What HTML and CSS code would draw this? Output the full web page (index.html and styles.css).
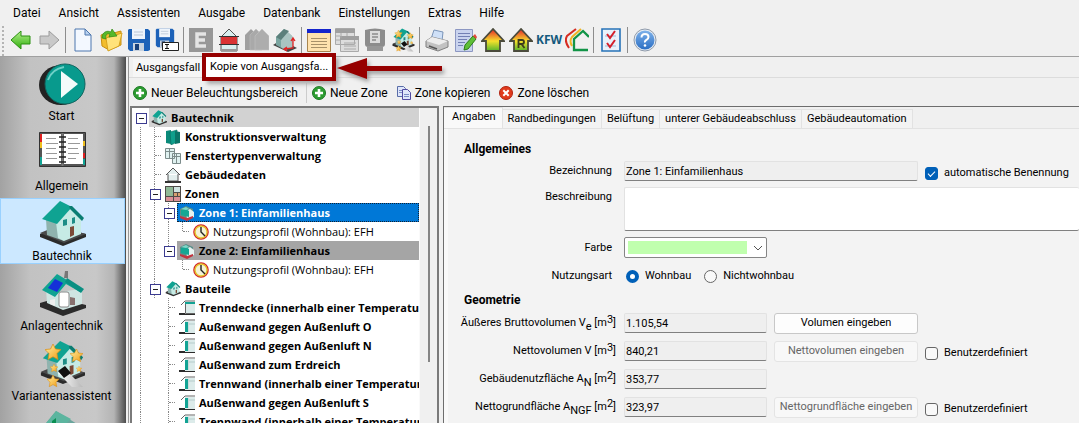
FILE: index.html
```html
<!DOCTYPE html>
<html lang="de">
<head>
<meta charset="utf-8">
<title>Bautechnik</title>
<link rel="stylesheet" href="styles.css">
</head>
<body>
<svg class="defs" aria-hidden="true">
  <defs>
    <linearGradient id="g-green" x1="0" y1="0" x2="0" y2="1"><stop offset="0" stop-color="#b4f08c"/><stop offset="1" stop-color="#2fae0c"/></linearGradient>
    <linearGradient id="g-heat" x1="0" y1="0" x2="0" y2="1"><stop offset="0.1" stop-color="#e8432a"/><stop offset="0.55" stop-color="#f5e02c"/><stop offset="1" stop-color="#55b52c"/></linearGradient>
    <linearGradient id="g-blue" x1="0" y1="0" x2="0" y2="1"><stop offset="0" stop-color="#7fb2ea"/><stop offset="1" stop-color="#2b6fc4"/></linearGradient>
    <linearGradient id="g-star" x1="0" y1="0" x2="1" y2="1"><stop offset="0" stop-color="#fff3a8"/><stop offset="1" stop-color="#f29a10"/></linearGradient>
    <linearGradient id="g-wand" x1="0" y1="0" x2="1" y2="0"><stop offset="0" stop-color="#fff"/><stop offset="1" stop-color="#b8b8b8"/></linearGradient>
  </defs>
  <symbol id="house" viewBox="0 0 48 48">
    <path d="M2 34l17-7 29 7v3L25 46 2 37z" fill="#2b2b2b"/>
    <path d="M2 33l17-7 29 8-22 9z" fill="#4a4a4a"/>
    <path d="M8 19l12 3 6 19-17-6z" fill="#8fb3ae"/>
    <path d="M18 22L31 6l12 12v16L26 41l-6-3z" fill="#c6ebe5"/>
    <path d="M4 19L22 1l12 6-15 17z" fill="#0fa392"/>
    <path d="M31 6l3 0 12 12-2 3L32 9z" fill="#0a7d72"/>
    <path d="M25 20l4-1v6l-4 1zM34 18l3-1v6l-3 1z" fill="#1d8d86"/>
    <path d="M32 27l4-1v9l-4 2z" fill="#7c4a36"/>
  </symbol>
  <symbol id="solar" viewBox="0 0 48 48">
    <path d="M2 33l17-5 29 7v3L25 46 2 37z" fill="#2b2b2b"/>
    <path d="M8 19l12 3 24-3v15l-19 6-16-7z" fill="#cfe5e2"/>
    <path d="M26 8h4v-7h-3z" fill="#777"/>
    <path d="M4 20L19 4l25 15-2 3-14-8-11 13z" fill="#0fa392"/>
    <path d="M29 8L46 19l-3 4L27 12z" fill="#0a8f82"/>
    <path d="M10 18l7-9 8 4-6 9z" fill="#1530d8"/>
    <rect x="21" y="22" width="10" height="15" rx="2" fill="#fff" stroke="#888"/>
    <path d="M12 30l5-1v7l-5-2z" fill="#eee"/><path d="M32 27l5 1v7h-5z" fill="#87706e"/>
  </symbol>
  <symbol id="star" viewBox="0 0 16 16"><path d="M8 0l2.500 5 5.500.6-4 4 1 6L8 12.800 3 15.600l1-6-4-4L5.500 5z" fill="url(#g-star)" stroke="#d98c12" stroke-width=".7"/></symbol>
  <symbol id="wizard" viewBox="0 0 48 48">
    <use href="#house" width="48" height="46"/>
    <path d="M26 29l7 6 12 12H34L20 33z" fill="url(#g-wand)"/>
    <path d="M20 31l7-5 6 7-7 5z" fill="#111"/>
    <use href="#star" x="7" y="4" width="16" height="16"/><use href="#star" x="32" y="9" width="13" height="13"/>
    <use href="#star" x="12" y="24" width="8" height="8"/><use href="#star" x="9" y="35" width="12" height="12"/><use href="#star" x="38" y="26" width="6" height="6"/>
  </symbol>
  <symbol id="floppy" viewBox="0 0 24 24">
    <path d="M2 1h19l2 2v19l-2 1H3l-2-2V2z" fill="#1d62b8"/><path d="M5 1h13v10H5z" fill="#eef4fb"/>
    <path d="M7 4h9M7 7h9" stroke="#b9c6d6"/><path d="M6 15h11v8H6z" fill="#c9d3df"/><path d="M8 16h4v6H8z" fill="#173f79"/>
  </symbol>
  <symbol id="page" viewBox="0 0 24 24"><path d="M4 1h10l6 6v16H4z" fill="#f3f8ff" stroke="#4c76ae"/><path d="M14 1v6h6z" fill="#b9d2f0" stroke="#4c76ae"/></symbol>
  <symbol id="plus" viewBox="0 0 14 14"><circle cx="7" cy="7" r="6.500" fill="#2c9c31" stroke="#1b7822"/><path d="M7 3v8M3 7h8" stroke="#fff" stroke-width="2.600"/></symbol>
  <symbol id="part" viewBox="0 0 16 16"><path d="M6 2h10v12H6z" fill="#dcebea"/><path d="M2 5L6 1h10" fill="none" stroke="#666"/><path d="M9 3v10M10 5h6" stroke="#b5cccb"/><path d="M6 3h3v10H6z" fill="#12a394"/><path d="M0 13h6v2H0zM5 14h11v1H5z" fill="#2b2b2b"/></symbol>
  <symbol id="slab" viewBox="0 0 16 16"><path d="M7 4h9v9H7z" fill="#dcebea"/><path d="M2 5L6 1h10M6.500 4v9.500H16" fill="none" stroke="#666"/><path d="M6 3h10" stroke="#12a394" stroke-width="2"/><path d="M0 13h6v2H0zM5 14h11v1H5z" fill="#2b2b2b"/></symbol>
  <symbol id="zone" viewBox="0 0 16 16"><path d="M1 4l6-3 7 3v7l-6 4-7-4z" fill="#5a8f89"/><path d="M7 6l4-2 4 3v5l-7 2z" fill="#e6f2f0"/><path d="M2 5l5-1 3 2v6l-8-2z" fill="#14a794"/><path d="M2 4l5-2 3 2-3 1z" fill="#7fd8c9"/><path d="M1 11l7 2 6-2v2l-6 3-7-3z" fill="#c4333f"/></symbol>
  <symbol id="clock" viewBox="0 0 16 16"><circle cx="8" cy="8" r="7" fill="#f5f3d7" stroke="#d3222a" stroke-width="1.600"/><circle cx="8" cy="8" r="6" fill="none" stroke="#e4c62c" stroke-width="1.400"/><path d="M8 3v5l4 4" fill="none" stroke="#222" stroke-width="1.400"/></symbol>
</svg>

<nav class="menu" aria-label="Menü">
  <button>Datei</button><button>Ansicht</button><button>Assistenten</button><button>Ausgabe</button><button>Datenbank</button><button>Einstellungen</button><button>Extras</button><button>Hilfe</button>
</nav>

<div class="toolbar" role="toolbar">
  <button aria-label="Zurück"><svg viewBox="0 0 24 24"><path d="M2 12L12 3v5h9v8h-9v5z" fill="url(#g-green)" stroke="#2a9010"/></svg></button>
  <button aria-label="Vor"><svg viewBox="0 0 24 24"><path d="M22 12L12 3v5H3v8h9v5z" fill="#c9c9c9" stroke="#9c9c9c"/></svg></button>
  <i></i>
  <button aria-label="Neu"><svg viewBox="0 0 24 24"><use href="#page"/></svg></button>
  <button aria-label="Öffnen"><svg viewBox="0 0 24 24"><path d="M2 7l7-3 2 2 11-3v14l-12 5-7-4z" fill="#f2bd2e" stroke="#c78f12"/><path d="M7 10l16-5-3 13-11 5z" fill="#ffe27a" stroke="#d7a21e"/><path d="M3 10C3 4 8 2 12 4l1-3 5 7-8 1 1-3C8 5 6 7 7 11z" fill="#55b82b" stroke="#2f8a12" stroke-width=".7"/></svg></button>
  <button aria-label="Speichern"><svg viewBox="0 0 24 24"><use href="#floppy"/></svg></button>
  <button aria-label="Speichern unter"><svg viewBox="0 0 24 24"><use href="#floppy" width="20" height="20"/><path d="M7.500 14.500h16v8h-16z" fill="#fff" stroke="#222"/><path d="M10 16.500h4M10 20.500h4M12 16v5" stroke="#111"/></svg></button>
  <i></i>
  <button aria-label="Energieausweis"><svg viewBox="0 0 24 24"><path d="M0 0h24v24H0z" fill="#979797"/><path d="M17 6H8v12h9M8 12h8" fill="none" stroke="#e4e4e4" stroke-width="3.500"/></svg></button>
  <button aria-label="Schnitt"><svg viewBox="0 0 24 24"><path d="M4 9l8-8 8 8v14H4z" fill="#d9efef" stroke="#555"/><path d="M4 9h16v7H4z" fill="#d93434"/><path d="M2 8.500h20M2 16.500h20" stroke="#333"/><path d="M4 22h16" stroke="#999" stroke-width="2"/></svg></button>
  <button aria-label="Gebäude"><svg viewBox="0 0 24 24"><path d="M0 7l6-6 6 6v15H0z" fill="#a0a0a0"/><path d="M5 7l6-6 6 6v15H5z" fill="#a9a9a9" stroke="#bdbdbd" stroke-width=".6"/><path d="M10 8l7-7 7 7v14H10z" fill="#adadad" stroke="#c2c2c2" stroke-width=".6"/></svg></button>
  <button aria-label="Ausrichtung"><svg viewBox="0 0 24 24"><path d="M0 17l8-5 16 8-9 4z" fill="#444"/><path d="M3 9l8-8 8 7v11l-7 3-9-5z" fill="#7aa5a0"/><path d="M8 12l6-9 6 6v10l-8 3-4-3z" fill="#a9c4c1"/><path d="M3 9l8-8 5 2-8 9z" fill="#5b7f7b"/><path d="M20 11v9l-8 1M18 13l2-3 2 3M14 19l-3 2 3 2" fill="none" stroke="#e02424" stroke-width="1.300"/></svg></button>
  <i></i>
  <button aria-label="Tabelle"><svg viewBox="0 0 24 24"><path d="M.5 1.500h23v22H.5z" fill="#ffe2ae" stroke="#a88650"/><path d="M0 1h24v4H0z" fill="#1424cc"/><path d="M4 10.500h16M4 13.500h16M4 16.500h16M4 19.500h16" stroke="#a89068"/></svg></button>
  <button aria-label="Listen"><svg viewBox="0 0 24 24"><path d="M.5.500h19v16H.5zM5.500 9.500h18v14h-18z" fill="#ddd" stroke="#aaa"/><path d="M0 1h20v4H0zM5 8h19v4H5z" fill="#9f9f9f"/><path d="M6 5v5M12 5v3M0 8h5M0 12h5M9 15h12M9 18h12M9 21h12" stroke="#aaa"/></svg></button>
  <button aria-label="Bericht"><svg viewBox="0 0 24 24"><path d="M2 2q10-3 20 0v14q0 3-3 3H5q-3 0-3-3z" fill="#8c8c8c"/><path d="M7 3h10v12H7z" fill="#dcdcdc"/><path d="M9 6h6M9 9h6M9 12h4" stroke="#8c8c8c" stroke-width="1.500"/><path d="M4 18h16v5H4z" fill="#979797"/></svg></button>
  <button aria-label="Assistent"><svg viewBox="0 0 48 48"><use href="#wizard"/></svg></button>
  <i></i>
  <button aria-label="Drucken"><svg viewBox="0 0 24 24"><path d="M6 11L9 2l9 2-1 9z" fill="#cfe0f7" stroke="#7a94b8"/><path d="M1 13l6-4 16 4v6l-10 4-12-4z" fill="#c2c2c2" stroke="#808080"/><path d="M1 13l6-4 16 4-9 4z" fill="#ededed"/><path d="M4 18l8 3" stroke="#555" stroke-width="1.500"/></svg></button>
  <button aria-label="Bearbeiten"><svg viewBox="0 0 24 24"><path d="M2.500 1.500h17v22h-17z" fill="#c9d3ee" stroke="#8c97c2"/><path d="M5 5.500h12M5 8.500h12M5 11.500h9M5 14.500h7M5 17.500h5" stroke="#7380b4"/><path d="M11 22l1-5L20 8l3 3-8 10z" fill="#5fbf38" stroke="#2c7d15"/><path d="M20 8l2-2 2 3-1 2z" fill="#e24a3c"/></svg></button>
  <button aria-label="Wärme"><svg viewBox="0 0 24 24"><path d="M12 1L1 13h4v10h14V13h4z" fill="url(#g-heat)" stroke="#4b4b3c" stroke-width="1.800"/></svg></button>
  <button aria-label="Referenz"><svg viewBox="0 0 24 24"><path d="M12 1L1 13h4v10h14V13h4z" fill="url(#g-heat)" stroke="#4b4b3c" stroke-width="1.800"/><path d="M9.500 20v-8H13q2 0 2 2t-2 2H9.500m3 0l3 4" fill="none" stroke="#3b3b1c" stroke-width="1.800"/></svg></button>
  <button class="kfw">KFW</button>
  <button aria-label="Sanierung"><svg viewBox="0 0 24 24"><path d="M4 20Q-1 13 2 8L11 1" fill="none" stroke="#d62c22" stroke-width="2"/><path d="M7 18Q4 13 7 9L16 1" fill="none" stroke="#f0b324" stroke-width="2"/><path d="M24 9l-6-6-9 8v11h14" fill="none" stroke="#129447" stroke-width="2.300"/></svg></button>
  <i></i>
  <button aria-label="Prüfliste"><svg viewBox="0 0 24 24"><path d="M3 1h18v22H3z" fill="#e9f2fb" stroke="#2773b8" stroke-width="1.600"/><path d="M6 8h11M6 18h11" stroke="#9dbbd6"/><path d="M8 6l3 4 5-7M8 15l3 4 5-7" fill="none" stroke="#d3202c" stroke-width="2"/></svg></button>
  <i></i>
  <button aria-label="Hilfe"><svg viewBox="0 0 24 24"><circle cx="12" cy="12" r="11" fill="#e8edf3" stroke="#8f9bab"/><circle cx="12" cy="12" r="9.500" fill="url(#g-blue)"/><path d="M8.500 9.500q0-3.500 3.500-3.500t3.500 3q0 1.800-2 2.900T12 14.500" fill="none" stroke="#fff" stroke-width="2"/><circle cx="12" cy="17.500" r="1.300" fill="#fff"/></svg></button>
</div>

<div class="app">
  <nav class="side" aria-label="Bereiche">
    <a href="#start"><svg viewBox="0 0 48 48"><ellipse cx="23" cy="25" rx="22" ry="20" fill="#222"/><ellipse cx="27" cy="24" rx="20" ry="20" fill="#089a8d" stroke="#10655f"/><path d="M10 20Q14 9 26 7" fill="none" stroke="#6fd0c7" stroke-width="2"/><path d="M23 11v27l17-14z" fill="#f4fbfa"/></svg>Start</a>
    <a href="#allgemein"><svg viewBox="0 0 48 48"><path d="M1.500 2.500h46v34h-46z" fill="#555" stroke="#333"/><path d="M4 4h19v30H4zM26 4h19v30H26z" fill="#fff"/><path d="M2 4h2v8H2zM45 23h2v5h-2z" fill="#e02020"/><path d="M2 12h2v6H2zM45 11h2v5h-2z" fill="#f0c020"/><path d="M2 27h2v8H2zM45 29h2v6h-2z" fill="#12a394"/><path d="M8 8.500h10M8 13.500h12M8 18.500h10M8 23.500h11M8 28.500h11M30 8.500h10M30 13.500h12M30 18.500h10M30 23.500h11M30 28.500h8" stroke="#999"/><path d="M24.500 3v33" stroke="#777" stroke-width="2"/><path d="M21 7h7M21 12h7M21 17h7M21 22h7M21 27h7M21 32h7" stroke="#222" stroke-width="1.500"/></svg>Allgemein</a>
    <a href="#bautechnik" class="on"><svg><use href="#house"/></svg>Bautechnik</a>
    <a href="#anlagentechnik"><svg><use href="#solar"/></svg>Anlagentechnik</a>
    <a href="#varianten"><svg><use href="#wizard"/></svg>Variantenassistent</a>
    <a href="#weiter" aria-label="Weiterer Bereich"><svg viewBox="0 0 48 48"><path d="M4 18L18 1l26 16v19H6z" fill="#6aa59c"/><path d="M4 18L18 1l15 8-15 14z" fill="#5cb59f"/><path d="M14 11l4-3v8l-4 2z" fill="#0a8f52"/></svg></a>
  </nav>

  <main class="main">
    <div class="cases" role="tablist">
      <button role="tab">Ausgangsfall</button>
      <div class="current"><button role="tab" aria-selected="true">Kopie von Ausgangsfa...</button>
        <svg class="arrow" viewBox="0 0 110 36"><path d="M2 17L32 7v8h75v5H32v8z" fill="#960000"/></svg>
      </div>
    </div>
    <div class="actions" role="toolbar">
      <button><svg><use href="#plus"/></svg>Neuer Beleuchtungsbereich</button>
      <i></i>
      <button><svg><use href="#plus"/></svg>Neue Zone</button>
      <button><svg viewBox="0 0 14 14"><path d="M.5.500h6l2 2v8h-8z" fill="#dfe6fa" stroke="#596da8"/><path d="M5.500 3.500h5l3 3v7h-8z" fill="#dfe6fa" stroke="#5149a0"/><path d="M7 8.500h5M7 10.500h5M2 4.500h3M2 6.500h3" stroke="#7b8cc4"/></svg>Zone kopieren</button>
      <button><svg viewBox="0 0 14 14"><circle cx="7" cy="7" r="6.500" fill="#e03a1c" stroke="#b02310"/><path d="M4.300 4.300l5.400 5.400M9.700 4.300L4.300 9.700" stroke="#fff" stroke-width="2"/></svg>Zone löschen</button>
    </div>

    <div class="split">
      <section class="treebox">
        <ul class="tree">
          <li class="grey"><b class="box end"></b><span><svg><use href="#house"/></svg>Bautechnik</span></li>
          <li><b></b><b class="tee"></b><span><svg viewBox="0 0 16 16"><path d="M1 2l5-1v14l-5-1z" fill="#0b8a7a"/><path d="M5 3l7-2v12l-6 3z" fill="#0f9f8c" stroke="#07695d" stroke-width=".6"/><path d="M10 2l5 1v11l-5 1z" fill="#0a7568"/></svg>Konstruktionsverwaltung</span></li>
          <li><b></b><b class="tee"></b><span><svg viewBox="0 0 16 16"><path d="M.5.500h9v10h-9zM7.500 5.500h8v10h-8z" fill="#dff1f0" stroke="#7c8c8b"/><path d="M4.500 0v10M0 3.500h10M11.500 5v11M7 8.500h9" stroke="#7c8c8b"/></svg>Fenstertypenverwaltung</span></li>
          <li><b></b><b class="tee"></b><span><svg viewBox="0 0 16 16"><path d="M1 8l7-7 7 7M3 7v7h10V7" fill="#e3efee" stroke="#555"/><path d="M0 14h16v2H0z" fill="#333"/></svg>Gebäudedaten</span></li>
          <li><b></b><b class="box"></b><span><svg viewBox="0 0 16 16"><path d="M0 0h16v16H0z" fill="#4e4b48"/><path d="M1 1h7v9H1z" fill="#8fb896"/><path d="M9 1h6v5H9z" fill="#cfe3e0"/><path d="M9 7h3v3H9zM13 7h2v3h-2z" fill="#d8a070"/><path d="M1 11h7v4H1zM9 11h6v4H9z" fill="#d98f96"/></svg>Zonen</span></li>
          <li class="picked"><b></b><b></b><b class="box"></b><span><svg><use href="#zone"/></svg>Zone 1: Einfamilienhaus</span></li>
          <li class="sub"><b></b><b></b><b></b><b class="tee last"></b><span><svg><use href="#clock"/></svg>Nutzungsprofil (Wohnbau): EFH</span></li>
          <li class="dark"><b></b><b></b><b class="box last"></b><span><svg><use href="#zone"/></svg>Zone 2: Einfamilienhaus</span></li>
          <li class="sub"><b></b><b></b><b class="none"></b><b class="tee last"></b><span><svg><use href="#clock"/></svg>Nutzungsprofil (Wohnbau): EFH</span></li>
          <li><b></b><b class="box"></b><span><svg><use href="#house"/></svg>Bauteile</span></li>
          <li><b></b><b class="none"></b><b class="tee"></b><span><svg><use href="#slab"/></svg>Trenndecke (innerhalb einer Temperaturzone)</span></li>
          <li><b></b><b class="none"></b><b class="tee"></b><span><svg><use href="#part"/></svg>Außenwand gegen Außenluft O</span></li>
          <li><b></b><b class="none"></b><b class="tee"></b><span><svg><use href="#part"/></svg>Außenwand gegen Außenluft N</span></li>
          <li><b></b><b class="none"></b><b class="tee"></b><span><svg><use href="#part"/></svg>Außenwand zum Erdreich</span></li>
          <li><b></b><b class="none"></b><b class="tee"></b><span><svg><use href="#part"/></svg>Trennwand (innerhalb einer Temperaturzone)</span></li>
          <li><b></b><b class="none"></b><b class="tee"></b><span><svg><use href="#part"/></svg>Außenwand gegen Außenluft S</span></li>
          <li><b></b><b class="none"></b><b class="tee"></b><span><svg><use href="#part"/></svg>Trennwand (innerhalb einer Temperaturzone)</span></li>
        </ul>
        <div class="scroll"><div class="thumb"></div></div>
      </section>

      <section class="detail">
        <div class="tabs" role="tablist">
          <button role="tab" aria-selected="true">Angaben</button><button role="tab">Randbedingungen</button><button role="tab">Belüftung</button><button role="tab">unterer Gebäudeabschluss</button><button role="tab">Gebäudeautomation</button>
        </div>
        <form class="form">
          <h2>Allgemeines</h2>
          <div class="row"><label for="name">Bezeichnung</label><input id="name" class="text long" readonly value="Zone 1: Einfamilienhaus"><label class="check low"><input type="checkbox" checked>automatische Benennung</label></div>
          <div class="row top"><label for="desc">Beschreibung</label><textarea id="desc"></textarea></div>
          <div class="row"><label for="color">Farbe</label><div class="combo"><select id="color" aria-label="Farbe"><option></option></select><svg viewBox="0 0 10 6"><path d="M1 1l4 4 4-4" fill="none" stroke="#555"/></svg></div></div>
          <div class="row radios"><span class="label">Nutzungsart</span><label class="check"><input type="radio" name="use" checked>Wohnbau</label><label class="check"><input type="radio" name="use">Nichtwohnbau</label></div>
          <h2>Geometrie</h2>
          <div class="geo">
            <div class="row"><label for="ve">Äußeres Bruttovolumen V<sub>e</sub> [m<sup>3</sup>]</label><input id="ve" class="text" readonly value="1.105,54"><button type="button">Volumen eingeben</button></div>
            <div class="row"><label for="v">Nettovolumen V [m<sup>3</sup>]</label><input id="v" class="text" readonly value="840,21"><button type="button" disabled>Nettovolumen eingeben</button><label class="check low"><input type="checkbox">Benutzerdefiniert</label></div>
            <div class="row"><label for="an">Gebäudenutzfläche A<sub>N</sub> [m<sup>2</sup>]</label><input id="an" class="text" readonly value="353,77"></div>
            <div class="row"><label for="ngf">Nettogrundfläche A<sub>NGF</sub> [m<sup>2</sup>]</label><input id="ngf" class="text" readonly value="323,97"><button type="button" disabled>Nettogrundfläche eingeben</button><label class="check low"><input type="checkbox">Benutzerdefiniert</label></div>
          </div>
        </form>
      </section>
    </div>
  </main>
</div>
</body>
</html>
```
FILE: styles.css
```css
* { box-sizing: border-box; }
body {
  margin: 0; height: 100vh; overflow: hidden;
  display: flex; flex-direction: column;
  background: #f0f0f0; color: #000;
  font: 12px/16px Roboto, "Open Sans", sans-serif;
}
button { font: inherit; color: inherit; border: 0; background: none; padding: 0; margin: 0; white-space: nowrap; }
.defs { position: absolute; width: 0; height: 0; }

.menu { display: flex; gap: 18px; padding: 5px 13px 3px; flex: none; }

.toolbar {
  display: flex; align-items: center; height: 32px; padding-left: 7px; flex: none;
  background: linear-gradient(#b4b4b4 2px, transparent 2px) 2px 2px / 2px 4px repeat-y;
}
.toolbar button { width: 28px; height: 28px; display: grid; place-items: center; }
.toolbar svg { width: 24px; height: 24px; }
.toolbar i { width: 1px; height: 26px; margin: 0 3px 0 2px; background: #8d8d8d; }
.toolbar .kfw { font: bold 12px/24px "Open Sans", sans-serif; color: #155a7d; }

.app { flex: 1; min-height: 0; display: flex; border-top: 1px solid #a0a0a0; }
.side {
  width: 128px; flex: none; overflow: hidden;
  display: flex; flex-direction: column; gap: 4px; padding: 1px 3px 0 0;
  background: linear-gradient(90deg, #a2a2a2, #c2c2c2 30px, #c8c8c8 96px, #b4b4b4 114px, #4c4c4c 126px, #f0f0f0 126px);
}
.side a { flex: none; height: 66px; padding: 2px 2px 0 0; display: flex; flex-direction: column; align-items: center; color: #000; text-decoration: none; }
.side svg { width: 48px; height: 48px; flex: none; }
.side .on { background: #cce8ff; border: 1px solid #99d1ff; padding: 1px 1px 0 0; }

.main { flex: 1; min-width: 0; display: flex; flex-direction: column; border-left: 1px solid #999; }
.cases { display: flex; align-items: flex-end; height: 21px; padding-left: 4px; border-bottom: 1px solid #dcdcdc; font-size: 11px; flex: none; }
.cases > button { height: 18px; padding: 0 6px 0 3px; background: #f6f6f6; }
.current { position: relative; }
.current button { display: block; height: 20px; width: 126px; background: #fff; outline: 4px solid #960000; box-shadow: 4px 4px 4px 3px #aaa; }
.arrow { position: absolute; left: 129px; top: -6px; width: 110px; height: 36px; filter: drop-shadow(2px 3px 2px #999); }
.actions { display: flex; align-items: center; gap: 9px; height: 28px; padding: 2px 0 0 4px; flex: none; }
.actions button { display: flex; align-items: center; gap: 4px; }
.actions svg { width: 14px; height: 14px; }
.actions i { width: 1px; height: 20px; background: #ccc; margin: 0 -4px 0 -1px; }

.split { flex: 1; min-height: 0; display: flex; gap: 4px; padding-left: 1px; }
.treebox { width: 309px; flex: none; display: flex; background: #fff; border: 2px solid #7a7a7a; border-bottom: 0; overflow: hidden; }
.tree { list-style: none; margin: 0; padding: 0 0 0 1px; flex: 1; min-width: 0; font: bold 11px/18px "Open Sans", sans-serif; }
.tree li { display: flex; height: 19px; overflow: hidden; white-space: nowrap; }
.tree b { width: 14px; height: 19px; flex: none; position: relative; background: repeating-linear-gradient(#888 0 1px, transparent 1px 2px) 7px 0 / 1px 19px no-repeat; }
.tree .none, .tree .end { background: none; }
.tree .last { background-size: 1px 10px; }
.tree .tee::after { content: ""; position: absolute; left: 8px; top: 9px; width: 6px; border-top: 1px dotted #888; }
.tree .box::before { content: ""; position: absolute; left: 3px; top: 5px; width: 9px; height: 9px; border: 1px solid #3b3b90; background: linear-gradient(#222, #222) center / 5px 1px no-repeat #fff; }
.tree span { flex: 1; margin: 0 0 0 2px; padding-left: 2px; display: flex; gap: 4px; align-items: center; }
.tree svg { width: 16px; height: 16px; flex: none; }
.grey span { background: #d2d2d2; }
.dark span { background: #a5a5a5; }
.picked span { background: #0078d7; color: #fff; outline: 1px dotted #123; outline-offset: -1px; }
.sub { font-weight: normal; }
.scroll { width: 18px; flex: none; background: #f0f0f0; border-left: 1px solid #fafafa; display: flex; justify-content: center; padding-top: 18px; }
.thumb { width: 2px; height: 236px; background: #858585; }

.detail { flex: 1; min-width: 0; border: solid #6d6d6d; border-width: 1px 0 0 1px; background: #f9f9f9; font-size: 11px; display: flex; flex-direction: column; }
.tabs { display: flex; align-items: flex-end; height: 22px; background: #f0f0f0; border-bottom: 1px solid #e2e2e2; flex: none; }
.tabs button { height: 19px; padding: 0 5px; background: #f3f3f3; border: solid #e2e2e2; border-width: 1px 1px 0 0; }
.tabs [aria-selected] { height: 21px; padding: 0 6px 2px 8px; background: #f9f9f9; }
.form { flex: 1; margin-left: 4px; padding: 12px 0 0 10px; background: #f3f3f3; }
h2 { font-size: 12px; line-height: 16px; margin: 0 0 4px; padding-left: 6px; }
.row { display: flex; align-items: center; min-height: 20px; margin-bottom: 6px; }
.row > label:first-child, .label { width: 154px; margin-right: 12px; text-align: right; flex: none; white-space: nowrap; }
.top { align-items: flex-start; }
.top label { padding-top: 2px; }
.text, textarea { font: inherit; font-size: 11px; color: #000; border: 1px solid #e2e2e2; border-bottom-color: #808080; border-radius: 2px; padding: 0 1px; margin: 0; background: #efefef; outline: 0; }
.text { width: 143px; height: 20px; flex: none; }
.long { width: 294px; }
textarea { flex: 1; height: 44px; background: #fff; resize: none; border-right: 0; }
.check { display: flex; align-items: center; gap: 6px; margin-left: 7px; white-space: nowrap; }
.check input { appearance: none; width: 13px; height: 13px; margin: 0; border: 1px solid #666; border-radius: 3px; background: #f9f9f9; }
.check input[type=checkbox]:checked { border-color: #0060b8; background: #0060b8; display: grid; place-items: center; }
.check input[type=checkbox]:checked::after { content: ""; width: 6px; height: 3px; border: solid #fff; border-width: 0 0 1px 1px; transform: rotate(-45deg); }
.check input[type=radio] { border-radius: 50%; }
.check input[type=radio]:checked { border: 4px solid #0060b8; background: #fff; }
.low { align-self: flex-end; }
.combo { position: relative; display: flex; }
.combo select { appearance: none; width: 143px; height: 21px; border: 1px solid #858585; border-radius: 2px; background: linear-gradient(#c0ffae, #c0ffae) 3px 3px / 119px 13px no-repeat #fff; }
.combo svg { position: absolute; right: 4px; top: 8px; width: 10px; height: 6px; pointer-events: none; }
.radios { margin: 8px 0 6px; }
.radios .label + .check { margin: 0 6px 0 2px; }
.geo { display: grid; gap: 8px; padding-top: 1px; }
.geo .row { margin: 0; height: 20px; }
.geo .row > label:first-child { width: 158px; margin-right: 8px; }
.geo button { width: 144px; height: 21px; margin-left: 7px; border: 1px solid #c8c8c8; border-radius: 3px; background: #fdfdfd; flex: none; }
.geo button:disabled { color: #666; background: #f8f8f8; border-color: #e4e4e4; }
sub, sup { font-size: 11px; line-height: 0; }
sub { vertical-align: -4px; }
sup { vertical-align: 3px; }
```
